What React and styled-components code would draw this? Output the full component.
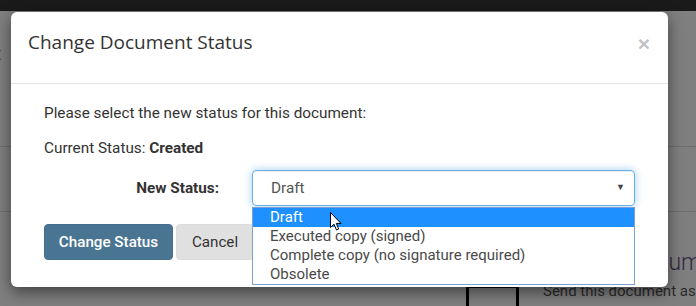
import React from "react";
import styled, { createGlobalStyle } from "styled-components";

const Global = createGlobalStyle`
  html, body { margin: 0; padding: 0; }
  body { width: 696px; height: 306px; overflow: hidden; background: #fff; font-family: Roboto, "Liberation Sans", sans-serif; }
  #root { position: relative; width: 696px; height: 306px; overflow: hidden; }
`;

const Page = styled.div`
  width: 696px;
  height: 306px;
  display: flex;
  flex-direction: column;
  background: #fff;
`;

const TopBar = styled.div`
  height: 11px;
  background: #343434;
  flex: none;
`;

const Section = styled.div`
  height: ${(p) => p.h}px;
  flex: none;
  border-bottom: ${(p) => (p.line ? "1px solid #dcdcdc" : "none")};
  box-sizing: border-box;
  position: relative;
`;

const LinkText = styled.div`
  padding: 30px 0 0 0;
  margin-left: -14px;
  font-family: "Open Sans", sans-serif;
  font-size: 18px;
  color: #3a6a9a;
`;

const DocArea = styled.div`
  display: grid;
  grid-template-columns: 77px 1fr;
  padding: 37px 0 0 466px;
`;

const DocHeading = styled.div`
  grid-column: 2;
  font-family: Roboto, sans-serif;
  font-weight: 300;
  font-size: 23px;
  color: #6a5488;
  white-space: nowrap;
  padding-left: 9px;
`;

const IconBox = styled.div`
  width: 53px;
  height: 40px;
  border: 3px solid #000;
  box-sizing: border-box;
  margin-top: 9px;
`;

const SendText = styled.div`
  font-family: Roboto, sans-serif;
  font-size: 15px;
  color: #555;
  white-space: nowrap;
  margin-top: 6px;
`;

const Overlay = styled.div`
  position: absolute;
  inset: 0;
  background: rgba(0, 0, 0, 0.5);
`;

const Modal = styled.div`
  position: absolute;
  left: 11px;
  top: 12px;
  width: 657px;
  background: #fff;
  border-radius: 6px;
  box-shadow: 0 5px 15px rgba(0, 0, 0, 0.5);
  display: flex;
  flex-direction: column;
`;

const Header = styled.div`
  height: 72px;
  box-sizing: border-box;
  padding: 0 17px 11px 17px;
  border-bottom: 1px solid #e5e5e5;
  display: flex;
  align-items: center;
  justify-content: space-between;
`;

const Title = styled.h4`
  margin: 0;
  font-family: "Open Sans", sans-serif;
  font-weight: 400;
  font-size: 19px;
  line-height: 24px;
  color: #333;
`;

const Close = styled.span`
  font-family: "Liberation Sans", Arial, sans-serif;
  font-weight: 700;
  font-size: 21px;
  line-height: 1;
  color: #c2c2c2;
  margin-right: 1px;
  margin-top: 2px;
`;

const Body = styled.div`
  padding: 19px 33px 27px 33px;
  display: flex;
  flex-direction: column;
  color: #333;
  font-size: 15.3px;
`;

const Para = styled.p`
  margin: 0 0 ${(p) => p.mb}px 0;
  line-height: 20px;
`;

const FormRow = styled.div`
  position: relative;
  display: grid;
  grid-template-columns: 175px 1fr;
  column-gap: 33px;
  align-items: center;
`;

const Label = styled.label`
  text-align: right;
  font-weight: 700;
  color: #333;
`;

const Select = styled.div`
  height: 36px;
  box-sizing: border-box;
  border: 1px solid #66afe9;
  border-radius: 4px;
  box-shadow: inset 0 1px 1px rgba(0, 0, 0, 0.075), 0 0 8px rgba(102, 175, 233, 0.6);
  display: flex;
  align-items: center;
  justify-content: space-between;
  padding: 0 9px 0 18px;
  color: #555;
`;

const Caret = styled.span`
  font-size: 9px;
  color: #444;
  margin-top: -2px;
`;

const List = styled.ul`
  position: absolute;
  left: 208px;
  right: 0;
  top: 37px;
  margin: 0;
  padding: 0;
  list-style: none;
  background: #fff;
  border: 1px solid #7c9fd4;
  z-index: 2;
`;

const Option = styled.li`
  height: 19px;
  line-height: 19px;
  padding-left: 17px;
  background: ${(p) => (p.active ? "#1e90ff" : "#fff")};
  color: ${(p) => (p.active ? "#fff" : "#4a4a4a")};
  font-size: 15px;
`;

const Actions = styled.div`
  display: flex;
  gap: 3px;
  margin-top: 18px;
`;

const Button = styled.button`
  height: 36px;
  box-sizing: border-box;
  padding: 0;
  border-radius: 4px;
  border: 1px solid ${(p) => (p.primary ? "#436f8c" : "#dcdcdc")};
  background: ${(p) => (p.primary ? "#4a7592" : "#e0e0e0")};
  color: ${(p) => (p.primary ? "#fff" : "#333")};
  font-family: Roboto, sans-serif;
  font-size: 15.2px;
  font-weight: ${(p) => (p.primary ? 500 : 400)};
  width: ${(p) => p.w}px;
`;

const Cursor = styled.svg`
  position: absolute;
  left: 330px;
  top: 212px;
  z-index: 5;
`;

export default function App() {
  return (
    <>
      <Global />
      <Page>
        <TopBar />
        <Section h={136} line>
          <LinkText>ct</LinkText>
        </Section>
        <Section h={65} line />
        <Section h={94}>
          <DocArea>
            <div />
            <DocHeading>Upload Document</DocHeading>
            <IconBox />
            <SendText>Send this document as</SendText>
          </DocArea>
        </Section>
      </Page>
      <Overlay />
      <Modal>
        <Header>
          <Title>Change Document Status</Title>
          <Close>×</Close>
        </Header>
        <Body>
          <Para mb={15}>Please select the new status for this document:</Para>
          <Para mb={12}>
            Current Status: <b>Created</b>
          </Para>
          <FormRow>
            <Label>New Status:</Label>
            <Select>
              <span>Draft</span>
              <Caret>▼</Caret>
            </Select>
            <List>
              <Option active>Draft</Option>
              <Option>Executed copy (signed)</Option>
              <Option>Complete copy (no signature required)</Option>
              <Option>Obsolete</Option>
            </List>
          </FormRow>
          <Actions>
            <Button primary w={129}>Change Status</Button>
            <Button w={78}>Cancel</Button>
          </Actions>
        </Body>
      </Modal>
      <Cursor width="12" height="19" viewBox="0 0 12 19">
        <path d="M0.5 0.5 L0.5 15.5 L4 12.2 L6.5 18 L8.7 17 L6.3 11.4 L11 11.4 Z" fill="#fff" stroke="#000" strokeWidth="1" strokeLinejoin="round" />
      </Cursor>
    </>
  );
}
